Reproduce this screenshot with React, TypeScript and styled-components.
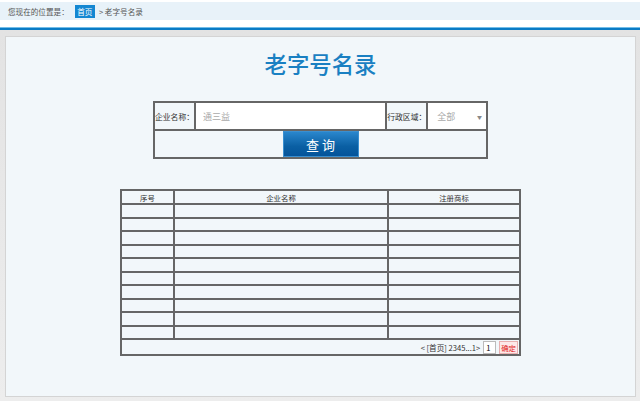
import React from 'react';
import styled, { createGlobalStyle } from 'styled-components';

const Global = createGlobalStyle`
  html, body {
    margin: 0;
    padding: 0;
    background: #ffffff;
    font-family: "Microsoft YaHei", "Noto Sans CJK SC", "Noto Sans", sans-serif;
  }
  * { box-sizing: border-box; }
`;

const rows = Array.from({ length: 10 }, (_, i) => i);

const App = () => {
  return (
    <>
      <Global />
      <Page>
        <TopBar>
          <Crumb>您现在的位置是：</Crumb>
          <HomeTag>首页</HomeTag>
          <Crumb>&gt; 老字号名录</Crumb>
        </TopBar>
        <BlueLine />
        <Stage>
          <Panel>
            <Title>老字号名录</Title>
            <SearchTable>
              <tbody>
                <tr>
                  <LabelCell style={{ width: 41 }}>企业名称：</LabelCell>
                  <FieldCell style={{ width: 193 }}>
                    <TextInput placeholder="通三益" />
                  </FieldCell>
                  <LabelCell style={{ width: 41 }}>行政区域：</LabelCell>
                  <FieldCell style={{ width: 60 }}>
                    <SelectBox>
                      <span>全部</span>
                      <Arrow>▼</Arrow>
                    </SelectBox>
                  </FieldCell>
                </tr>
                <tr>
                  <ButtonCell colSpan={4}>
                    <QueryButton>查询</QueryButton>
                  </ButtonCell>
                </tr>
              </tbody>
            </SearchTable>
            <DataTable>
              <thead>
                <tr>
                  <Th style={{ width: 53 }}>序号</Th>
                  <Th style={{ width: 214 }}>企业名称</Th>
                  <Th>注册商标</Th>
                </tr>
              </thead>
              <tbody>
                {rows.map((r) => (
                  <tr key={r}>
                    <Td />
                    <Td />
                    <Td />
                  </tr>
                ))}
                <tr>
                  <PagerCell colSpan={3}>
                    <Pager>
                      <span>&lt;&nbsp;[首页] 2345...1&gt;</span>
                      <PageInput defaultValue="1" />
                      <GoButton>确定</GoButton>
                    </Pager>
                  </PagerCell>
                </tr>
              </tbody>
            </DataTable>
          </Panel>
        </Stage>
      </Page>
    </>
  );
};

const Page = styled.div`
  width: 640px;
  height: 401px;
  display: flex;
  flex-direction: column;
  overflow: hidden;
`;

const TopBar = styled.div`
  margin-top: 2px;
  height: 18px;
  background: #e8f2f9;
  display: flex;
  align-items: center;
  gap: 3px;
  padding-left: 8px;
`;

const Crumb = styled.span`
  font-size: 7.6px;
  color: #555;
  margin-right: 3px;
`;

const HomeTag = styled.span`
  background: #1487d2;
  color: #fff;
  font-size: 7.6px;
  height: 13px;
  line-height: 13px;
  padding: 0 2.5px;
  margin-right: 1px;
`;

const BlueLine = styled.div`
  margin-top: 7px;
  height: 3px;
  border-top: 1px solid #73bde8;
  background: #0a7bc5;
`;

const Stage = styled.div`
  flex: 1;
  background: linear-gradient(#e3e3e3, #ededed);
  padding: 6px 4px 4px 5px;
  display: flex;
`;

const Panel = styled.div`
  flex: 1;
  background: #f2f7fa;
  border: 1px solid #d4d4d4;
  display: flex;
  flex-direction: column;
  align-items: center;
`;

const Title = styled.h1`
  margin: 12px 0 0;
  font-size: 22.4px;
  line-height: 28px;
  font-weight: 500;
  color: #1a80c2;
`;

const SearchTable = styled.table`
  margin-top: 24px;
  width: 335px;
  border-collapse: collapse;
  border: 2px solid #666;

  td {
    border: 2px solid #666;
    padding: 0;
  }
`;

const LabelCell = styled.td`
  height: 28px;
  font-size: 7.8px;
  color: #333;
  text-align: center;
  white-space: nowrap;
  background: #f2f7fa;
`;

const FieldCell = styled.td`
  background: #fff;
  height: 28px;
`;

const TextInput = styled.input`
  display: block;
  width: 100%;
  height: 26px;
  border: none;
  outline: none;
  background: #fff;
  padding: 0 7px;
  font-size: 9px;
  font-family: inherit;
  color: #333;

  &::placeholder {
    color: #aaa;
  }
`;

const SelectBox = styled.div`
  height: 26px;
  display: flex;
  align-items: center;
  justify-content: space-between;
  padding: 0 4px 0 9px;
  font-size: 9px;
  color: #aaa;
`;

const Arrow = styled.span`
  font-size: 5px;
  color: #888;
`;

const ButtonCell = styled.td`
  height: 27px;
  text-align: center;
  background: #f2f7fa;
`;

const QueryButton = styled.button`
  display: block;
  margin: 0 auto;
  width: 76px;
  height: 26px;
  border: 1px solid #3a8fd0;
  background: linear-gradient(#2a86cc, #0a5fa3 60%, #05549a);
  color: #fff;
  font-size: 13px;
  letter-spacing: 3px;
  text-indent: 3px;
  font-family: inherit;
  padding: 0;
`;

const DataTable = styled.table`
  margin-top: 30px;
  width: 401px;
  border-collapse: collapse;
  border: 2px solid #666;
`;

const Th = styled.th`
  height: 14px;
  border: 2px solid #666;
  font-size: 7.4px;
  font-weight: normal;
  color: #333;
  padding: 0;
`;

const Td = styled.td`
  height: 13.5px;
  border: 2px solid #666;
  padding: 0;
`;

const PagerCell = styled.td`
  height: 16px;
  border: 2px solid #666;
  padding: 0 1px 0 0;
`;

const Pager = styled.div`
  display: flex;
  justify-content: flex-end;
  align-items: center;
  gap: 3px;
  font-size: 7.6px;
  color: #333;
`;

const PageInput = styled.input`
  width: 13px;
  height: 13px;
  border: 1px solid #bbb;
  background: #fff;
  font-size: 7.6px;
  padding: 0 2px;
  font-family: inherit;
`;

const GoButton = styled.button`
  height: 13px;
  border: 1px solid #e8b0b0;
  background: #fde8e8;
  color: #e02020;
  font-size: 7.4px;
  padding: 0 1px;
  font-family: inherit;
`;

export default App;
